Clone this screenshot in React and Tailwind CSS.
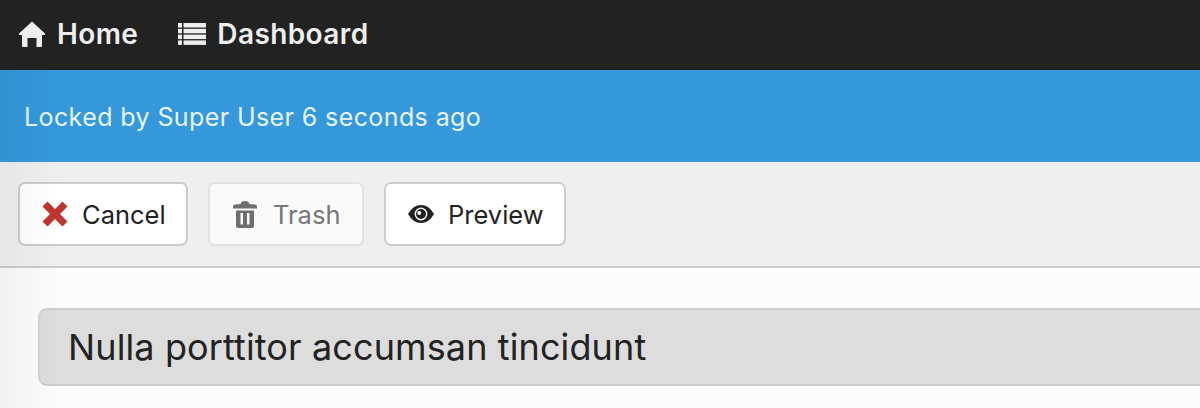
import React from 'react';

const HomeIcon = () => (
    <svg width="28" height="26" viewBox="0 0 28 26" className="shrink-0 mb-[1px] text-[#eeeeee]" fill="currentColor">
        <path d="M14 0.5 L27 12.4 Q27.8 14 26.2 14 L24 14 L24 25 Q24 26 23 26 L18.5 26 L18.5 17 L9.5 17 L9.5 26 L5 26 Q4 26 4 25 L4 14 L1.8 14 Q0.2 14 1 12.4 Z" />
    </svg>
);

const ListIcon = () => (
    <svg width="28" height="22" viewBox="0 0 28 22" className="shrink-0 text-[#eeeeee]" fill="currentColor">
        <rect x="0" y="0" width="4" height="4.5" />
        <rect x="0" y="5.8" width="4" height="4.5" />
        <rect x="0" y="11.6" width="4" height="4.5" />
        <rect x="0" y="17.4" width="4" height="4.5" />
        <rect x="5.5" y="0" width="22.5" height="4.5" />
        <rect x="5.5" y="5.8" width="22.5" height="4.5" />
        <rect x="5.5" y="11.6" width="22.5" height="4.5" />
        <rect x="5.5" y="17.4" width="22.5" height="4.5" />
    </svg>
);

const CrossIcon = () => (
    <svg width="26" height="26" viewBox="0 0 26 26" className="shrink-0 text-[#bd362f]" fill="currentColor">
        <path d="M5.5 0.5 L13 8 L20.5 0.5 L25.5 5.5 L18 13 L25.5 20.5 L20.5 25.5 L13 18 L5.5 25.5 L0.5 20.5 L8 13 L0.5 5.5 Z" />
    </svg>
);

const TrashIcon = () => (
    <svg width="24" height="27" viewBox="0 0 24 27" className="shrink-0 text-[#6f6f6f]" fill="currentColor">
        <path d="M0 5.5 Q0 3.6 2 3.6 L7.5 3 Q8 0 12 0 Q16 0 16.5 3 L22 3.6 Q24 3.6 24 5.5 L24 7.5 L0 7.5 Z" />
        <path fillRule="evenodd" d="M3 9.5 L21 9.5 L21 25 Q21 27 19 27 L5 27 Q3 27 3 25 Z M7.5 12 L7.5 23.5 L10 23.5 L10 12 Z M14 12 L14 23.5 L16.5 23.5 L16.5 12 Z" />
    </svg>
);

const EyeIcon = () => (
    <svg width="26" height="18" viewBox="0 0 26 18" className="shrink-0 text-[#222222]" fill="currentColor">
        <path fillRule="evenodd" d="M0 9 Q5 0 13 0 Q21 0 26 9 Q21 18 13 18 Q5 18 0 9 Z M13 2.6 A6.4 6.4 0 1 0 13 15.4 A6.4 6.4 0 1 0 13 2.6 Z" />
        <path fillRule="evenodd" d="M13 4 A5 5 0 1 1 13 14 A5 5 0 1 1 13 4 Z M11.2 6 A2 2 0 1 0 11.2 10 A2 2 0 1 0 11.2 6 Z" />
    </svg>
);

const ToolbarButton = ({ icon, label, width, spacing, disabled }) => (
    <button
        className={`h-[64px] flex items-center rounded-[7px] border-2 text-[25.5px] ${width} ${spacing} ${disabled ? 'bg-[#fafafa] border-[#e2e2e2] text-[#777777]' : 'bg-white border-[#cccccc] text-[#222222]'}`}
    >
        {icon}
        <span className="pt-[2px]">{label}</span>
    </button>
);

export default function App() {
    return (
        <div className="relative w-[1200px] h-[408px] overflow-hidden bg-[#fcfcfc] font-['Inter',sans-serif]">
            <nav className="h-[70px] bg-[#222222] flex items-center pl-[18px] pb-[2px] gap-[40px] text-[28px] tracking-[0.4px] font-semibold text-[#eeeeee]">
                <a className="flex items-center gap-[11px]"><HomeIcon /> Home</a>
                <a className="flex items-center gap-[11px]"><ListIcon /> Dashboard</a>
            </nav>
            <div className="h-[92px] bg-[#3498db] flex items-center pl-[24px] pt-[4px] text-[25px] tracking-[0.4px] text-[#e8f4fb]">
                Locked by Super User 6 seconds ago
            </div>
            <div className="h-[106px] bg-[#efefef] border-b-2 border-[#cccccc] flex items-start pt-[20px] pl-[18px] gap-[20px]">
                <ToolbarButton icon={<CrossIcon />} label="Cancel" width="w-[170px]" spacing="pl-[22px] gap-[14px]" />
                <ToolbarButton icon={<TrashIcon />} label="Trash" width="w-[156px]" spacing="pl-[23px] gap-[16px]" disabled />
                <ToolbarButton icon={<EyeIcon />} label="Preview" width="w-[182px]" spacing="pl-[22px] gap-[14px]" />
            </div>
            <div className="pt-[40px] pl-[38px]">
                <div className="w-[1300px] h-[78px] flex items-center pl-[28px] rounded-[9px] bg-[#dddddd] border-y-2 border-l-2 border-y-[#cccccc] border-l-[#d4d4d4] text-[36px] tracking-[0.12px] text-[#222222]">
                    Nulla porttitor accumsan tincidunt
                </div>
            </div>
            {/* shadow falling off the left edge */}
            <div className="absolute left-0 top-[70px] bottom-0 w-[60px] pointer-events-none bg-gradient-to-r from-black/[0.04] to-transparent" />
        </div>
    );
}
